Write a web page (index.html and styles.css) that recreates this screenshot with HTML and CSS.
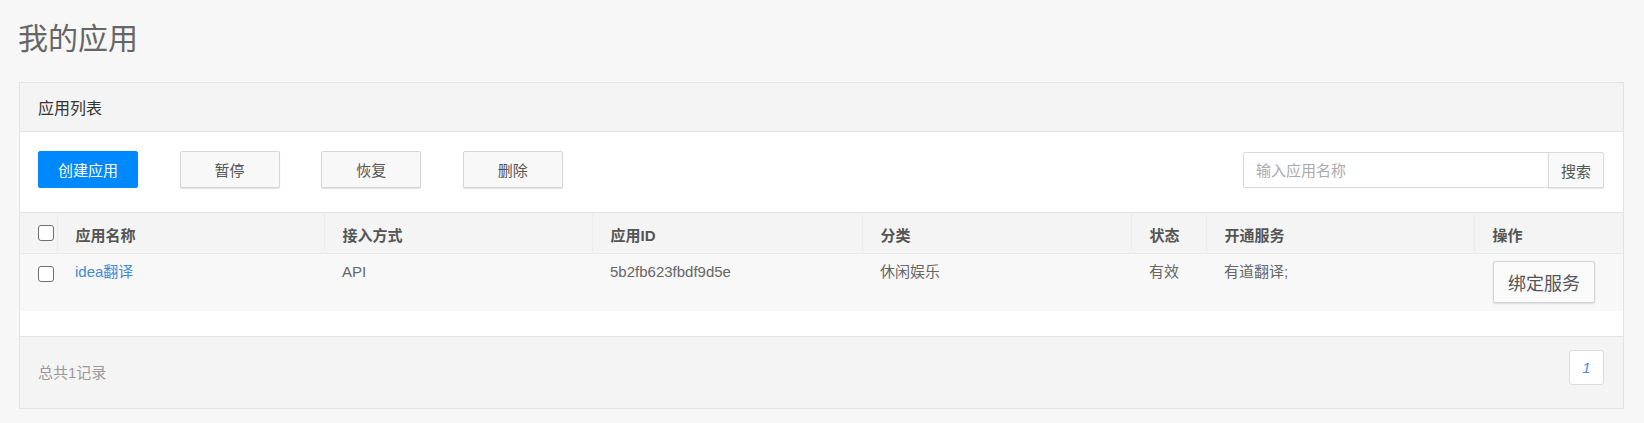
FILE: index.html
```html
<!DOCTYPE html>
<html lang="zh-CN">
<head>
<meta charset="utf-8">
<title>我的应用</title>
<link rel="stylesheet" href="styles.css">
</head>
<body>
<div class="page">
  <h1 class="page-title">我的应用</h1>
  <div class="panel">
    <div class="panel-heading">应用列表</div>
    <div class="toolbar">
      <div class="actions">
        <button class="btn btn-primary">创建应用</button>
        <button class="btn">暂停</button>
        <button class="btn">恢复</button>
        <button class="btn">删除</button>
      </div>
      <div class="search">
        <input class="search-input" type="text" placeholder="输入应用名称">
        <button class="search-btn">搜索</button>
      </div>
    </div>
    <table class="grid">
      <colgroup>
        <col class="c-check">
        <col class="c-name">
        <col class="c-access">
        <col class="c-id">
        <col class="c-cat">
        <col class="c-status">
        <col class="c-service">
        <col>
      </colgroup>
      <thead>
        <tr>
          <th class="cell-check"><input class="check" type="checkbox"></th>
          <th>应用名称</th>
          <th>接入方式</th>
          <th>应用ID</th>
          <th>分类</th>
          <th>状态</th>
          <th>开通服务</th>
          <th>操作</th>
        </tr>
      </thead>
      <tbody>
        <tr>
          <td class="cell-check"><input class="check" type="checkbox"></td>
          <td><a class="link" href="#">idea翻译</a></td>
          <td>API</td>
          <td>5b2fb623fbdf9d5e</td>
          <td>休闲娱乐</td>
          <td>有效</td>
          <td>有道翻译;</td>
          <td><button class="btn-bind">绑定服务</button></td>
        </tr>
      </tbody>
    </table>
    <div class="spacer"></div>
    <div class="panel-footer">
      <span class="total">总共1记录</span>
      <span class="page-num">1</span>
    </div>
  </div>
</div>
</body>
</html>
```

FILE: styles.css
```css
* { box-sizing: border-box; }
html, body {
  margin: 0;
  padding: 0;
  background: #f7f7f7;
  font-family: "Liberation Sans", "Noto Sans CJK SC", sans-serif;
  font-size: 15px;
  color: #666;
}
.page {
  padding: 19px 20px 0 19px;
}
.page-title {
  margin: 0 0 23px -1px;
  font-size: 30px;
  line-height: 40px;
  font-weight: normal;
  color: #666;
}
.panel {
  background: #fff;
  border: 1px solid #e3e3e3;
}
.panel-heading {
  height: 49px;
  padding: 0 18px;
  display: flex;
  align-items: center;
  background: #f4f4f4;
  border-bottom: 1px solid #e3e3e3;
  font-size: 16px;
  color: #333;
}
.toolbar {
  display: flex;
  justify-content: space-between;
  align-items: flex-start;
  padding: 19px 19px 24px 18px;
}
.actions {
  display: flex;
  gap: 41.6px;
}
.btn {
  width: 100px;
  height: 37px;
  border: 1px solid #d6d6d6;
  border-radius: 2px;
  background: #f8f8f8;
  box-shadow: 0 1px 1px rgba(0,0,0,0.12);
  font-family: inherit;
  font-size: 15px;
  color: #555;
  padding: 0;
}
.btn-primary {
  background: #0088ff;
  border-color: #0088ff;
  color: #fff;
  box-shadow: none;
}
.search {
  display: flex;
  margin-top: 1px;
}
.search-input {
  width: 306px;
  height: 36px;
  border: 1px solid #d9d9d9;
  border-radius: 2px 0 0 2px;
  padding: 0 12px;
  font-family: inherit;
  font-size: 15px;
  color: #666;
  outline: none;
}
.search-input::placeholder { color: #aaa; }
.search-btn {
  width: 56px;
  height: 36px;
  margin-left: -1px;
  border: 1px solid #d9d9d9;
  border-radius: 0 2px 2px 0;
  background: #f9f9f9;
  box-shadow: 0 1px 1px rgba(0,0,0,0.1);
  font-family: inherit;
  font-size: 15px;
  color: #555;
  padding: 0;
}
.grid {
  width: 100%;
  table-layout: fixed;
  border-collapse: collapse;
}
.c-check { width: 37px; }
.c-name { width: 267px; }
.c-access { width: 268px; }
.c-id { width: 270px; }
.c-cat { width: 269px; }
.c-status { width: 75px; }
.c-service { width: 268px; }
.grid thead tr {
  background: #f4f4f4;
  border-top: 1px solid #e3e3e3;
  border-bottom: 1px solid #e8e8e8;
}
.grid th {
  height: 41px;
  padding: 4px 18px 0;
  text-align: left;
  font-weight: bold;
  color: #555;
  line-height: 21px;
  border-left: 1px solid #ececec;
}
.grid th:first-child { border-left: none; }
.grid tbody tr { background: #f8f8f8; }
.grid td {
  padding: 7px 18px 8px;
  vertical-align: top;
  line-height: 21px;
  color: #666;
}
.grid td:last-child { padding-left: 19px; }
.grid .cell-check {
  padding-left: 18px;
  padding-right: 0;
}
.grid th.cell-check { padding-top: 0; }
.check {
  -webkit-appearance: none;
  appearance: none;
  display: block;
  width: 16px;
  height: 16px;
  margin: 0;
  border: 1px solid #6f6f6f;
  border-radius: 3px;
  background: #fff;
}
.grid td.cell-check .check { margin-top: 5px; }
.link {
  color: #3f8ad8;
  text-decoration: none;
}
.btn-bind {
  display: block;
  width: 102px;
  height: 42px;
  border: 1px solid #d4d4d4;
  border-radius: 2px;
  background: #fafafa;
  box-shadow: 0 1px 2px rgba(0,0,0,0.12);
  font-family: inherit;
  font-size: 18px;
  color: #555;
  padding: 0;
}
.spacer { height: 25px; }
.panel-footer {
  display: flex;
  justify-content: space-between;
  align-items: flex-start;
  padding: 13px 19px 23px 18px;
  background: #f4f4f4;
  border-top: 1px solid #e3e3e3;
}
.total {
  margin-top: 12px;
  line-height: 21px;
  color: #999;
}
.page-num {
  width: 35px;
  height: 35px;
  display: flex;
  align-items: center;
  justify-content: center;
  background: #fff;
  border: 1px solid #dcdcdc;
  border-radius: 3px;
  font-style: italic;
  color: #4a90d9;
  font-size: 15px;
}
```
